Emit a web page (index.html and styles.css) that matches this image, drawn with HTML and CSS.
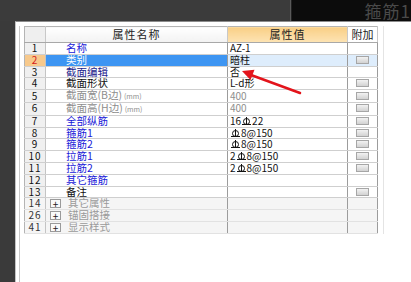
FILE: index.html
```html
<!DOCTYPE html>
<html lang="zh-CN">
<head>
  <meta charset="UTF-8" />
  <title>属性编辑器</title>
  <link rel="stylesheet" href="styles.css">
</head>
<body>
  <div class="app">
    <div class="topbar">
      <div class="top-left"></div>
      <div class="top-right">箍筋1</div>
    </div>

    <div class="main">
      <div class="side"></div>
      <div class="panel">
        <div class="frame">
          <div class="grid-wrap">
            <table class="props">
              <colgroup>
                <col class="c-num"><col class="c-name"><col class="c-val"><col class="c-add">
              </colgroup>
              <thead>
                <tr>
                  <th class="num"></th>
                  <th class="h-name">属性名称</th>
                  <th class="h-val">属性值</th>
                  <th class="h-add">附加</th>
                </tr>
              </thead>
              <tbody>
                <tr><td class="num">1</td><td class="name blue">名称</td><td class="val">AZ-1</td><td class="add"></td></tr>
                <tr class="selected"><td class="num">2</td><td class="name">类别</td><td class="val">暗柱</td><td class="add"><span class="chk"></span></td></tr>
                <tr><td class="num">3</td><td class="name navy">截面编辑</td><td class="val">否</td><td class="add"></td></tr>
                <tr><td class="num">4</td><td class="name">截面形状</td><td class="val">L-d形</td><td class="add"><span class="chk"></span></td></tr>
                <tr><td class="num">5</td><td class="name gray">截面宽(B边)<small>(mm)</small></td><td class="val gray">400</td><td class="add"><span class="chk"></span></td></tr>
                <tr><td class="num">6</td><td class="name gray">截面高(H边)<small>(mm)</small></td><td class="val gray">400</td><td class="add"><span class="chk"></span></td></tr>
                <tr><td class="num">7</td><td class="name blue">全部纵筋</td><td class="val">16<span class="bar"></span>22</td><td class="add"><span class="chk"></span></td></tr>
                <tr><td class="num">8</td><td class="name blue">箍筋1</td><td class="val"><span class="bar"></span>8@150</td><td class="add"><span class="chk"></span></td></tr>
                <tr><td class="num">9</td><td class="name blue">箍筋2</td><td class="val"><span class="bar"></span>8@150</td><td class="add"><span class="chk"></span></td></tr>
                <tr><td class="num">10</td><td class="name blue">拉筋1</td><td class="val">2<span class="bar"></span>8@150</td><td class="add"><span class="chk"></span></td></tr>
                <tr><td class="num">11</td><td class="name blue">拉筋2</td><td class="val">2<span class="bar"></span>8@150</td><td class="add"><span class="chk"></span></td></tr>
                <tr><td class="num">12</td><td class="name blue">其它箍筋</td><td class="val"></td><td class="add"></td></tr>
                <tr><td class="num">13</td><td class="name">备注</td><td class="val"></td><td class="add"><span class="chk"></span></td></tr>
                <tr class="group"><td class="num">14</td><td class="name"><span class="plus">+</span>其它属性</td><td class="val"></td><td class="add"></td></tr>
                <tr class="group"><td class="num">26</td><td class="name"><span class="plus">+</span>锚固搭接</td><td class="val"></td><td class="add"></td></tr>
                <tr class="group"><td class="num">41</td><td class="name"><span class="plus">+</span>显示样式</td><td class="val"></td><td class="add"></td></tr>
              </tbody>
            </table>
          </div>
        </div>
      </div>
    </div>

    <!-- annotation arrow drawn over the grid -->
    <svg class="arrow" width="411" height="282" viewBox="0 0 411 282">
      <line x1="300" y1="93" x2="251" y2="75" stroke="#e3141b" stroke-width="2.5" stroke-linecap="round"/>
      <polygon points="242,71 254.5,69.8 250.5,80" fill="#e3141b"/>
    </svg>
  </div>
</body>
</html>
```

FILE: styles.css
```css
body {
  margin: 0;
  padding: 0;
  font-family: "Noto Sans CJK SC", "DejaVu Sans", sans-serif;
}

.app {
  position: relative;
  width: 411px;
  height: 282px;
  overflow: hidden;
  background: #3a3a3a;
}

.topbar {
  display: flex;
  height: 21px;
}

.top-left {
  width: 293px;
  background: #3b3b3b;
  border-right: 1px solid #5a5a5a;
}

.top-right {
  flex: 1;
  background: #0c0c0c;
  border-left: 1px solid #222;
  color: #4a4a4a;
  font-size: 17px;
  line-height: 21px;
  padding-left: 73px;
  white-space: nowrap;
  letter-spacing: 1px;
}

.main {
  display: flex;
  height: 261px;
}

.side {
  width: 15px;
  background: #3a3a3a;
}

.panel {
  flex: 1;
  display: flex;
  background: #fff;
  border-left: 1px solid #c4c4c4;
  border-top: 1px solid #8c8c8c;
  padding: 4px 0 0 3px;
}

.frame {
  border-left: 1px solid #c8c8c8;
  padding-left: 4px;
}

.grid-wrap {
  align-self: flex-start;
  padding-right: 5px;
  border-right: 1px solid #e4e4e4;
}

.props {
  border-collapse: collapse;
  table-layout: fixed;
  width: 354px;
  font-size: 10.5px;
  color: #111;
  border: 1px solid #b4b4b4;
}

.c-num { width: 21px; }
.c-name { width: 182px; }
.c-val { width: 120px; }
.c-add { width: 30px; }

th {
  height: 15px;
  padding: 0;
  line-height: 15px;
  font-weight: normal;
  font-size: 11px;
  letter-spacing: 1px;
  color: #222;
  border-bottom: 1px solid #a8a8a8;
  border-right: 1px solid #c8c8c8;
  background: linear-gradient(#ffffff, #f2f2f2);
}

th.num {
  background: #efefef;
}

th.h-val {
  background: linear-gradient(#f9cf86, #fde4b4);
}

th.h-add {
  letter-spacing: 0;
  background: #fff;
}

td {
  height: 10.8px;
  padding: 0;
  line-height: 10.8px;
  white-space: nowrap;
  border-bottom: 1px solid #cfcfcf;
  border-right: 1px solid #9c9c9c;
}

td.num {
  text-align: center;
  background: #f0f0f0;
  font-size: 10px;
  letter-spacing: 1px;
  border-right: 1px solid #c4c4c4;
}

td.name {
  padding-left: 20px;
}

td.val {
  padding-left: 2px;
  font-size: 10px;
}

td.add {
  text-align: center;
}

.name small {
  font-size: 7px;
  margin-left: 2px;
}

.blue { color: #2020d8; }
.navy { color: #1c1c8c; }
.gray { color: #8e8e8e; }

.selected td.num {
  background: #f7c98c;
  color: #d41c1c;
}

.selected td.name {
  background: #3d95f2;
  color: #fff;
}

.selected td.val,
.selected td.add {
  background: #deedfc;
}

.group td {
  background: #f5f5f5;
  border-bottom: 1px solid #e2e2e2;
  color: #9a9a9a;
}

.group td.num {
  color: #333;
}

.group td.name {
  padding-left: 4px;
}

.plus {
  display: inline-block;
  width: 9px;
  height: 7px;
  line-height: 7px;
  margin-right: 7px;
  border: 1px solid #9a9a9a;
  background: #fafafa;
  color: #222;
  font-size: 10px;
  text-align: center;
  vertical-align: top;
  margin-top: 1px;
}

/* hrb400 rebar symbol */
.bar {
  display: inline-block;
  width: 7px;
  height: 7px;
  margin: 0 2px;
  border: 1px solid #111;
  border-radius: 50%;
  box-sizing: border-box;
  position: relative;
  vertical-align: top;
  margin-top: 2px;
}

.bar::before {
  content: "";
  position: absolute;
  left: 2px;
  top: -2px;
  width: 1px;
  height: 8px;
  background: #111;
}

.bar::after {
  content: "";
  position: absolute;
  left: -2px;
  top: 5px;
  width: 9px;
  height: 1px;
  background: #111;
}

.chk {
  display: inline-block;
  width: 11px;
  height: 6px;
  border: 1px solid #a6a6a6;
  background: linear-gradient(#f2f2f2, #d2d2d2);
  vertical-align: top;
  margin-top: 1px;
}

.arrow {
  position: absolute;
  left: 0;
  top: 0;
  pointer-events: none;
}
```
